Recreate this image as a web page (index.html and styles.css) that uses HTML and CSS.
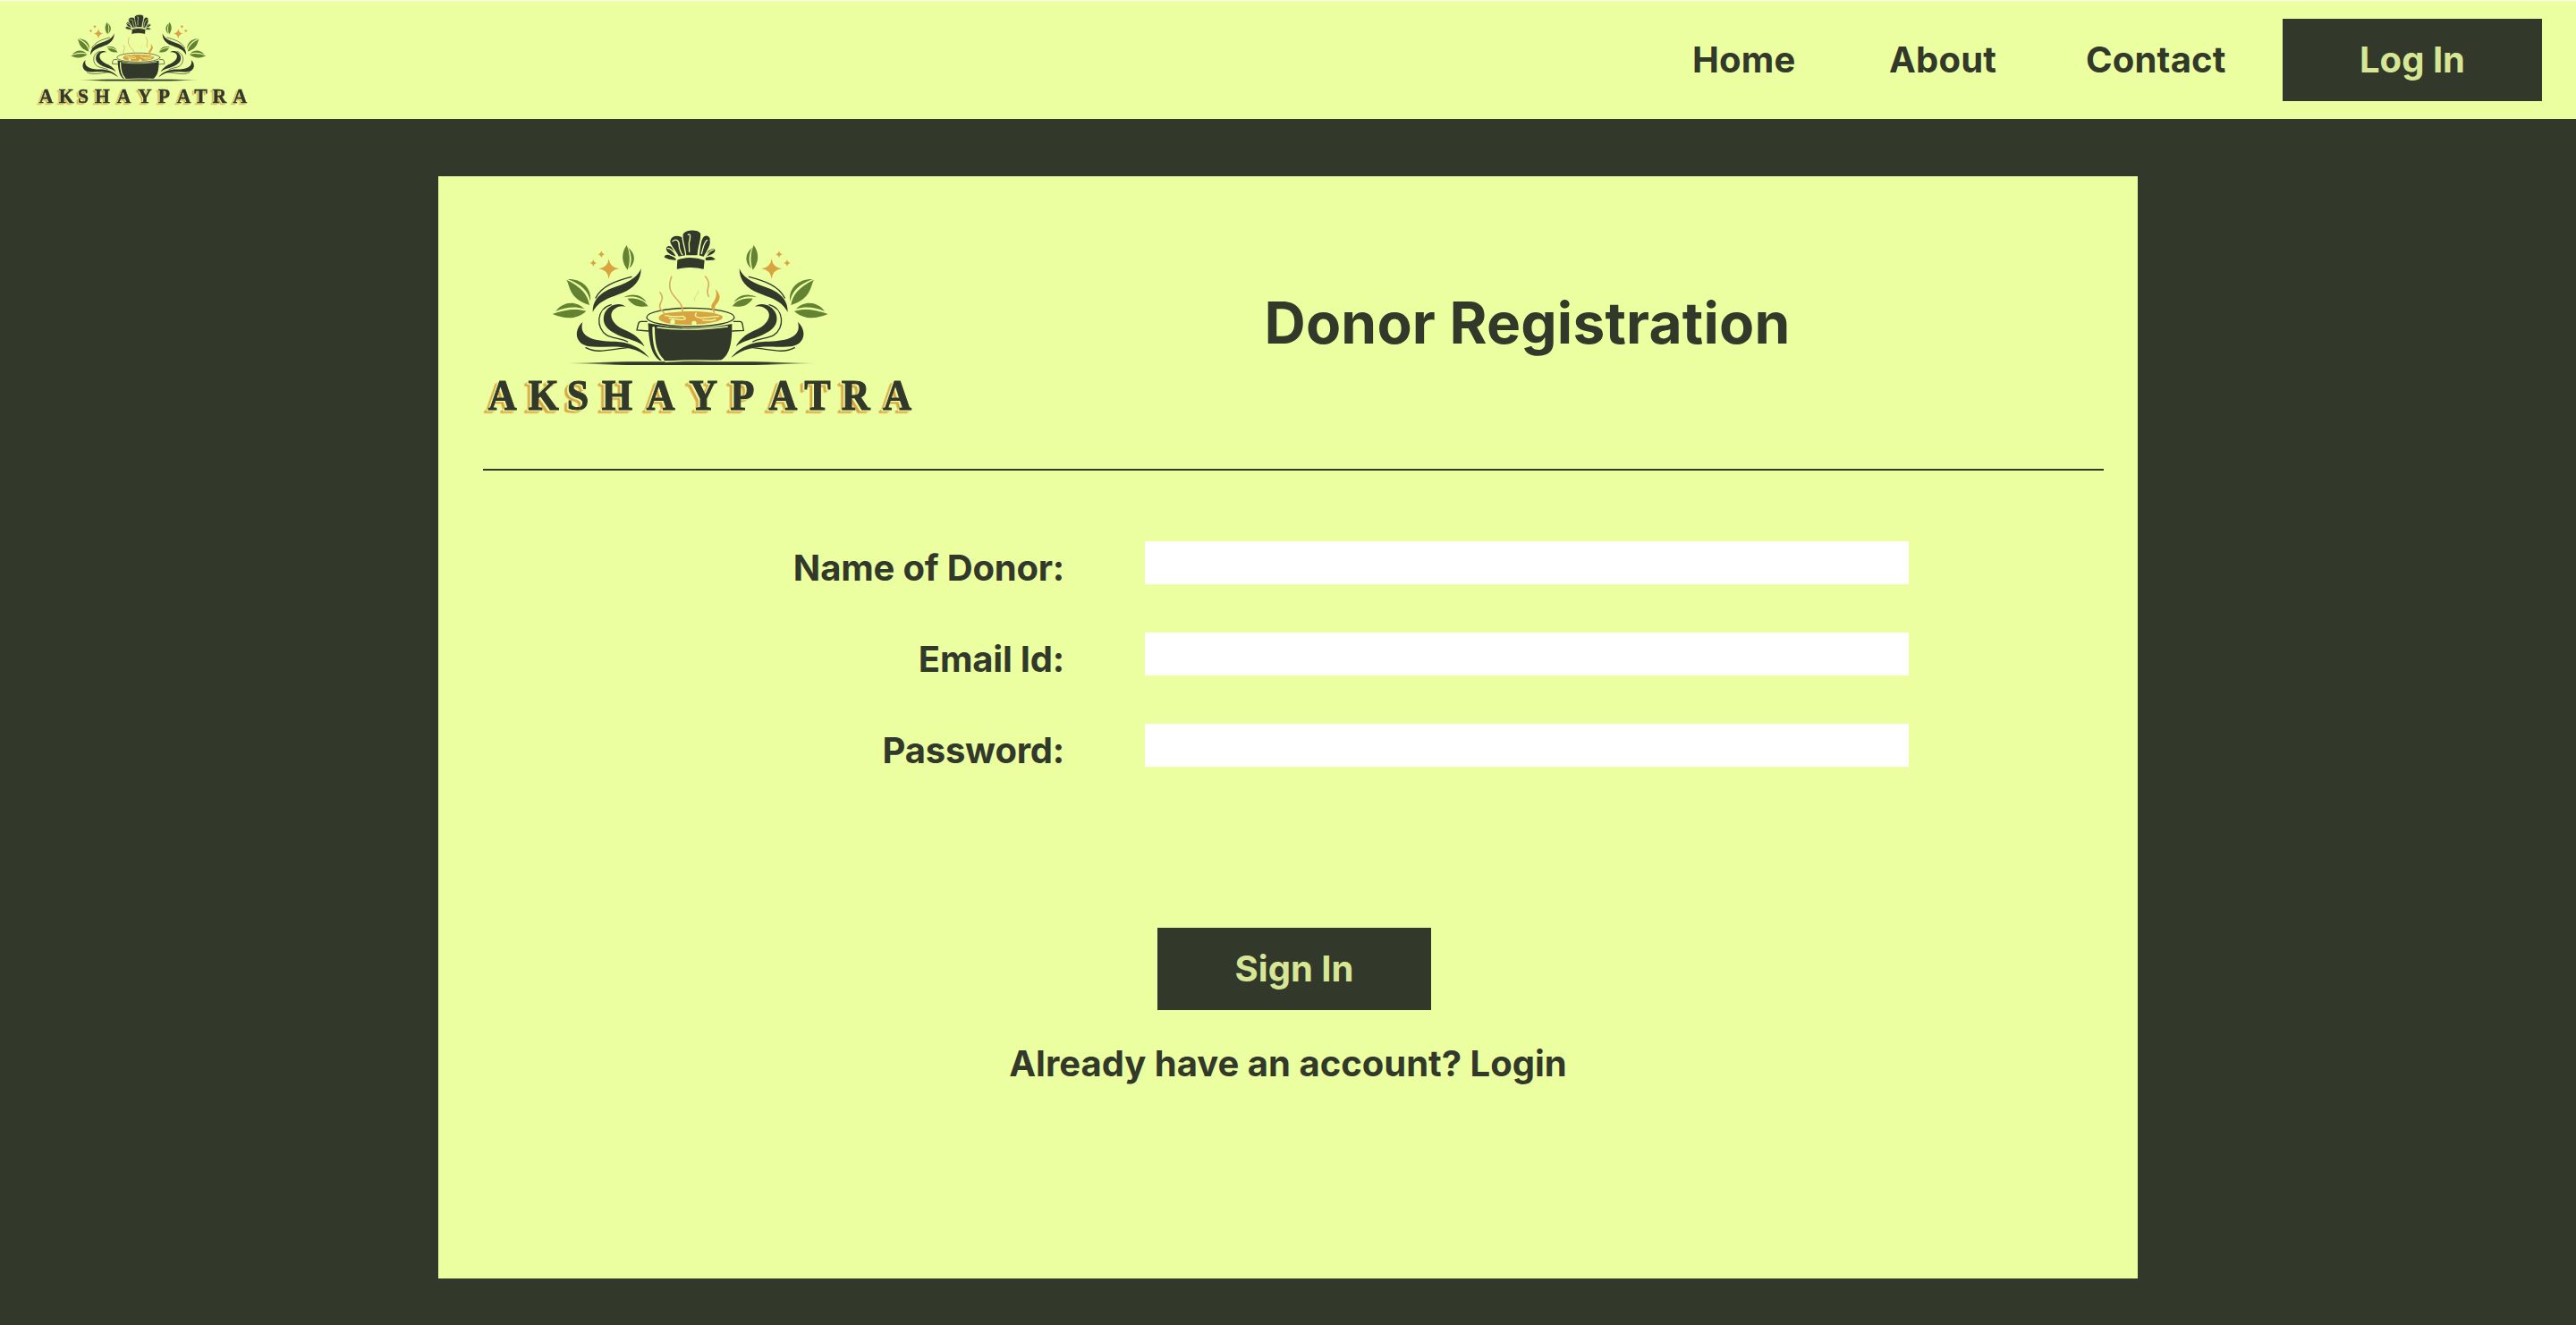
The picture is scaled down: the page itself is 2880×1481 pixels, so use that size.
FILE: index.html
```html
<!DOCTYPE html>
<html lang="en">
<head>
<meta charset="utf-8">
<title>Donor Registration</title>
<link rel="stylesheet" href="styles.css">
</head>
<body>
<nav class="navbar">
  <a class="brand" href="#">
    <svg class="logo logo-small" viewBox="-180 -30 1443 720" role="img">
      <defs>
        <linearGradient id="ground" x1="0" x2="1">
          <stop offset="0" stop-color="#32392b" stop-opacity="0"/>
          <stop offset=".2" stop-color="#32392b"/>
          <stop offset=".8" stop-color="#32392b"/>
          <stop offset="1" stop-color="#32392b" stop-opacity="0"/>
        </linearGradient>
        <g id="flourish">
          <g class="ink">
            <path d="M188 297C187 262 205 240 235 224C270 207 333 196 350 150C351 190 325 217 288 232C247 249 208 257 188 297Z"/>
            <path d="M298 279C284 262 238 268 226 306C216 350 257 368 300 384C330 393 348 400 362 412C345 380 320 368 292 355C250 335 238 300 264 284C276 276 290 275 298 279Z"/>
            <path d="M154 330C123 358 128 405 178 412C232 418 310 395 378 450C345 405 290 394 250 395C190 393 140 380 154 330Z"/>
          </g>
          <g class="ink-line">
            <path d="M198 249C218 208 265 192 318 178"/>
            <path d="M250 272C200 285 197 350 235 374C255 385 280 384 305 396"/>
            <path d="M165 416C205 438 250 420 315 415"/>
          </g>
          <g class="leaf">
            <path d="M302 72C282 100 285 130 305 155C314 130 314 102 302 72Z"/>
            <path d="M306 80C332 98 334 130 310 150C320 128 320 102 306 80Z"/>
            <path d="M100 188C113 210 107 250 177 273C171 236 150 213 100 188Z"/>
            <path d="M104 186C153 185 186 217 180 260C173 226 150 203 104 186Z"/>
            <path d="M53 303C90 318 132 325 166 293C130 284 100 287 53 303Z"/>
            <path d="M64 294C85 263 130 255 160 286C125 276 95 281 64 294Z"/>
            <path d="M305 251C320 274 342 282 374 277C357 254 333 249 305 251Z"/>
            <path d="M292 247C320 230 357 240 368 264C345 245 320 242 292 247Z"/>
          </g>
          <g class="gold">
            <path d="M242 118Q246 147 276 151Q246 155 242 185Q238 155 208 151Q238 147 242 118Z"/>
            <path d="M217 91Q219 101 229 103Q219 105 217 115Q215 105 205 103Q215 101 217 91Z"/>
            <path d="M190 120Q192 130 202 132Q192 134 190 144Q188 134 178 132Q188 130 190 120Z"/>
          </g>
        </g>
        <g id="mark">
          <use href="#flourish"/>
          <use href="#flourish" transform="translate(1030 0) scale(-1 1)"/>
          <path fill="url(#ground)" d="M90 468L300 463H730L945 468L730 474H300Z"/>
          <g class="ink hat">
            <path d="M468 124C450 125 440 122 427 115C424 103 435 101 445 103C455 106 465 112 470 118Z"/>
            <path d="M603 121C592 125 575 125 563 124L565 112C578 106 592 107 603 121Z"/>
            <path d="M470 113C450 108 434 98 432 84C434 70 448 70 457 79Z"/>
            <path d="M563 113C585 108 601 100 601 88C592 78 580 84 570 94Z"/>
            <path d="M475 112C468 94 450 78 446 61C447 42 463 37 478 40C492 43 499 52 499 68L502 108Z"/>
            <path d="M543 108C548 84 546 48 562 40C575 36 585 43 583 57C588 72 574 88 561 113Z"/>
            <path d="M500 108C500 85 486 55 489 35C496 19 538 15 550 30C558 45 540 78 541 108Z"/>
            <path d="M470 120Q515 104 565 121L562 155Q515 143 468 155Z"/>
          </g>
          <g class="shine">
            <path d="M456 59C468 48 479 58 478 75C478 86 483 95 488 104"/>
            <path d="M508 37C518 30 515 50 511 65L512 94"/>
            <path d="M572 55C560 64 558 82 553 101"/>
            <path d="M439 83C449 80 457 93 466 103"/>
            <path d="M592 88C581 88 575 101 568 108"/>
          </g>
          <g class="pot-line">
            <ellipse cx="516" cy="314" rx="147" ry="31"/>
            <path d="M370 328H350Q343 328 341 336L336 357L375 360M661 328H682Q688 328 690 336L694 358L656 360"/>
          </g>
          <path class="ink" d="M374 334Q515 364 655 336C656 400 648 438 620 457Q515 467 413 459C382 438 376 390 374 334Z"/>
          <path class="shine wide" d="M392 349C392 405 400 435 424 458"/>
          <path class="shine" d="M405 348Q515 362 640 345M432 463Q510 456 602 460"/>
          <path class="gold" d="M410 320C405 305 430 298 465 297C515 290 600 294 622 309C632 325 590 336 518 339C460 339 420 334 410 320Z"/>
          <path class="shine" d="M432 308Q462 314 490 310Q510 322 485 322L445 317M535 300Q525 312 548 316L610 311M556 323Q580 327 600 321"/>
          <circle class="cream" cx="456" cy="329" r="8"/>
          <circle class="cream" cx="528" cy="334" r="8"/>
          <g class="steam">
            <path d="M452 178C437 218 453 235 474 258C488 273 490 284 490 296"/>
            <path d="M414 231C434 256 406 266 414 284C419 293 428 294 428 304"/>
            <path d="M566 177C592 207 562 217 577 244"/>
            <path class="faint" d="M542 226C543 241 525 244 529 258"/>
          </g>
          <path class="gold" d="M599 219C621 240 615 257 603 270C594 280 598 290 597 305C592 291 581 280 589 268C599 254 607 240 599 219Z"/>
        </g>
      </defs>
      <use href="#mark"/>
      <text class="wordmark" transform="scale(.92 1)" y="625" x="-125 25 150 293 452 607 750 898 1024 1163 1315">AKSHAYPATRA</text>
    </svg>
  </a>
  <div class="links">
    <a href="#">Home</a>
    <a href="#">About</a>
    <a href="#">Contact</a>
  </div>
  <a class="button button-login" href="#">Log In</a>
</nav>
<main class="card">
  <header class="card-header">
    <svg class="logo logo-large" viewBox="-180 -30 1443 720" role="img">
      <use href="#mark"/>
      <text class="wordmark" transform="scale(.92 1)" y="625" x="-125 25 150 293 452 607 750 898 1024 1163 1315">AKSHAYPATRA</text>
    </svg>
    <h1 class="title">Donor Registration</h1>
  </header>
  <form class="form">
    <div class="fields">
      <label for="name">Name of Donor:</label><input id="name" type="text">
      <label for="email">Email Id:</label><input id="email" type="email">
      <label for="password">Password:</label><input id="password" type="password">
    </div>
    <button class="button button-submit" type="button">Sign In</button>
    <p class="switch">Already have an account? <a href="#">Login</a></p>
  </form>
</main>
</body>
</html>
```
FILE: styles.css
```css
:root {
  --lime: #ebffa1;
  --dark: #32392b;
  --gold: #d9a440;
}

* {
  box-sizing: border-box;
}

body {
  margin: 0;
  height: 1481px;
  border-top: 1px solid #fff;
  background: var(--dark);
  color: var(--dark);
  font: 700 40px/48px Inter, "Liberation Sans", sans-serif;
}

a {
  color: inherit;
  text-decoration: none;
}

.navbar {
  display: flex;
  align-items: center;
  height: 132px;
  padding: 0 38px 0 41px;
  background: var(--lime);
}

.brand {
  display: flex;
  margin-right: auto;
}

.links {
  display: grid;
  grid-template-columns: 220px 220px 220px;
  letter-spacing: 0.2px;
}

.button {
  display: flex;
  align-items: center;
  justify-content: center;
  height: 92px;
  padding: 0;
  border: 0;
  background: var(--dark);
  color: #d6e694;
  font: inherit;
}

.button-login {
  width: 290px;
}

.button-submit {
  width: 306px;
  margin: 180px 0 0 14px;
}

.card {
  width: 1900px;
  height: 1232px;
  margin: 64px auto 0;
  padding: 0 38px 0 50px;
  background: var(--lime);
}

.card-header {
  display: grid;
  grid-template-columns: 523px 1fr;
  align-items: center;
  height: 329px;
  border-bottom: 2px solid var(--dark);
}

.title {
  margin: 0;
  font-size: 64px;
  line-height: 78px;
  letter-spacing: 0.2px;
  text-align: center;
}

.form {
  display: flex;
  flex-direction: column;
  align-items: center;
  margin-right: 12px;
  padding-top: 79px;
}

.fields {
  display: grid;
  grid-template-columns: 650px 854px;
  grid-auto-rows: 48px;
  gap: 54px 90px;
  align-self: flex-start;
}

.fields label {
  padding-top: 6px;
  letter-spacing: -0.2px;
  text-align: right;
}

.fields input {
  height: 48px;
  border: 0;
  padding: 0 12px;
  background: #fff;
  font: inherit;
}

.switch {
  margin: 36px 0 0;
}

.logo {
  display: block;
  overflow: visible;
}

.logo-small {
  width: 236px;
  height: 117.75px;
}

.logo-large {
  width: 481px;
  height: 240px;
  margin-bottom: 1px;
}

.ink {
  fill: var(--dark);
}

.hat path {
  stroke: var(--lime);
  stroke-width: 4;
}

.ink-line,
.pot-line {
  fill: none;
  stroke: var(--dark);
  stroke-width: 4;
  stroke-linecap: round;
}

.shine {
  fill: none;
  stroke: var(--lime);
  stroke-width: 4;
  stroke-linecap: round;
}

.wide {
  stroke-width: 8;
}

.leaf {
  fill: #638232;
}

.gold {
  fill: var(--gold);
}

.cream {
  fill: var(--lime);
}

.steam {
  fill: none;
  stroke: #d9ac62;
  stroke-width: 5;
  stroke-linecap: round;
}

.faint {
  stroke-width: 3;
  opacity: 0.5;
}

.wordmark {
  fill: var(--dark);
  stroke: var(--dark);
  stroke-width: 3;
  font: 700 144px "Liberation Serif", serif;
  text-anchor: middle;
  filter: drop-shadow(-6px 4px 0 #ebffa1) drop-shadow(-9px 6px 0 #d9a440);
}
```
